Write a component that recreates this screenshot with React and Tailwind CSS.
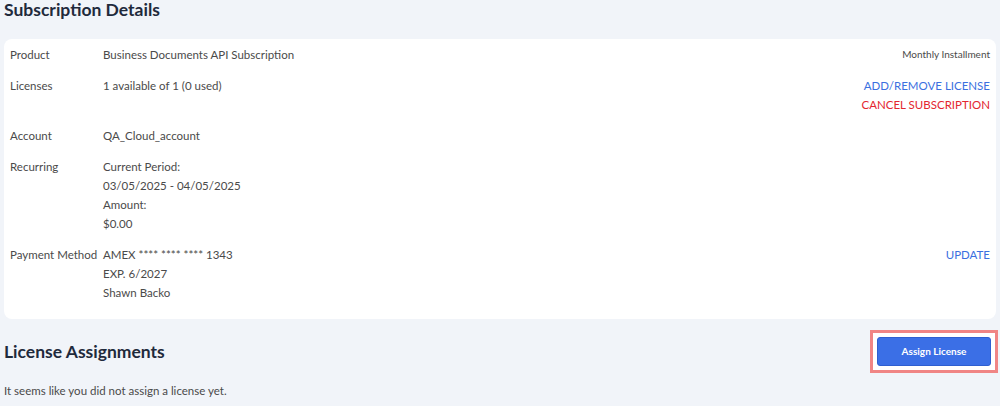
export default function App() {
  const font = { fontFamily: "Lato, 'Open Sans', sans-serif" };
  const Row = ({ label, children, right }) => (
    <div className="flex items-start py-[6px] leading-[19px] text-[11.5px] text-[#4a4a4a]">
      <div className="w-[93px] shrink-0 whitespace-nowrap">{label}</div>
      <div className="flex-1">{children}</div>
      <div className="text-right">{right}</div>
    </div>
  );
  return (
    <div style={font} className="w-[1000px] h-[406px] bg-[#f1f4f9] px-[4px] overflow-hidden">
      <h1 className="text-[17.5px] font-bold text-[#1f2a3c] leading-[24px] mt-[-2px] h-[41px]">Subscription Details</h1>
      <div className="bg-white rounded-[8px] px-[6px] pb-[11px] w-[992px]">
        <Row label="Product" right={<div className="text-[10px] text-[#4a4a4a]">Monthly Installment</div>}>
          Business Documents API Subscription
        </Row>
        <Row
          label="Licenses"
          right={
            <div className="flex flex-col">
              <div className="text-[#3b6fe0]">ADD/REMOVE LICENSE</div>
              <div className="text-[#e3262f]">CANCEL SUBSCRIPTION</div>
            </div>
          }
        >
          1 available of 1 (0 used)
        </Row>
        <Row label="Account">QA_Cloud_account</Row>
        <Row label="Recurring">
          <div>Current Period:</div>
          <div>03/05/2025 - 04/05/2025</div>
          <div>Amount:</div>
          <div>$0.00</div>
        </Row>
        <Row label="Payment Method" right={<div className="text-[#3b6fe0]">UPDATE</div>}>
          <div>AMEX **** **** **** 1343</div>
          <div>EXP. 6/2027</div>
          <div>Shawn Backo</div>
        </Row>
      </div>
      <div className="flex items-center justify-between mt-[10px] h-[45px]">
        <h2 className="text-[17.5px] font-bold text-[#1f2a3c] leading-[24px]">License Assignments</h2>
        <div className="border-[3px] border-[#f08585] bg-white p-[4px] mr-[-2px]">
          <button className="w-[114px] h-[29px] rounded-[3px] bg-[#3b6fe6] border border-[#2f5fd0] text-white text-[10px] font-bold">
            Assign License
          </button>
        </div>
      </div>
      <p className="text-[11.5px] text-[#4a4a4a] mt-[8px] leading-[17px]">It seems like you did not assign a license yet.</p>
    </div>
  );
}
